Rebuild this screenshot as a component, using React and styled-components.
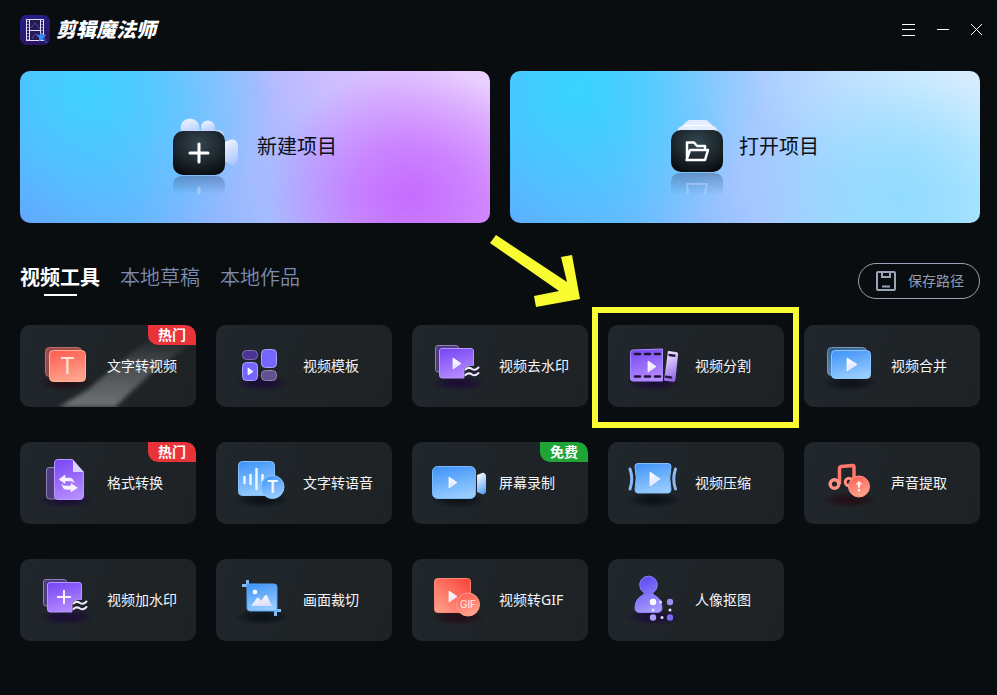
import React, { useState } from 'react'
import styled, { createGlobalStyle, css } from 'styled-components'

const GlobalStyle = createGlobalStyle`
  * {
    box-sizing: border-box;
  }

  body {
    margin: 0;
    background: #090d10;
    color: #fff;
    font-family: 'Noto Sans', 'Noto Sans CJK SC', sans-serif;
  }

  button {
    margin: 0;
    padding: 0;
    border: 0;
    background: none;
    color: inherit;
    font: inherit;
    cursor: pointer;
  }
`

const Page = styled.div`
  min-height: 100vh;
  padding-bottom: 54px;
  overflow: hidden;
`

const Header = styled.header`
  display: flex;
  align-items: center;
  justify-content: space-between;
  height: 59px;
  padding: 0 3px 0 20px;
`

const Brand = styled.div`
  display: flex;
  align-items: center;
  gap: 6px;
`

const BrandName = styled.h1`
  margin: 0;
  font-size: 20px;
  line-height: 28px;
  font-weight: 900;
  font-style: italic;
`

const WindowControls = styled.div`
  display: flex;
`

const ControlButton = styled.button`
  display: flex;
  align-items: center;
  justify-content: center;
  width: 34px;
  height: 34px;
`

const Main = styled.main`
  padding: 12px 17px 0 20px;
`

const Banners = styled.div`
  display: grid;
  grid-template-columns: 1fr 1fr;
  gap: 20px;
`

const newProject = css`
  background: radial-gradient(ellipse 30% 85% at 83% 82%, #c76cff 0%, #c76cffb0 40%, #c76cff00 100%),
    radial-gradient(ellipse 50% 90% at 100% 0%, #e8d4ff 0%, #e8d4ff00 100%),
    radial-gradient(ellipse 40% 110% at 14% 14%, #40d2ff 0%, #40d2ffa0 40%, #40d2ff00 100%),
    linear-gradient(75deg, #68a0ff 0%, #6cb0ff 22%, #a4bcff 48%, #c0b4ff 68%, #e09cff 100%);
`

const openProject = css`
  background: radial-gradient(ellipse 30% 85% at 83% 82%, #92dcff 0%, #92dcffb0 40%, #92dcff00 100%),
    radial-gradient(ellipse 50% 90% at 100% 0%, #d8ecff 0%, #d8ecff00 100%),
    radial-gradient(ellipse 40% 110% at 14% 14%, #38d4ff 0%, #38d4ffa0 40%, #38d4ff00 100%),
    linear-gradient(75deg, #62a8ff 0%, #6cb6ff 22%, #a6c6ff 48%, #a9d2ff 68%, #bcf0ff 100%);
`

const Banner = styled.button`
  display: flex;
  align-items: center;
  justify-content: center;
  gap: ${({ $open }) => ($open ? 16 : 18)}px;
  height: 152px;
  border-radius: 10px;
  color: #0a0f16;
  font-size: 20px;
  line-height: 28px;
  ${({ $open }) => ($open ? openProject : newProject)}
`

const Toolbar = styled.div`
  display: flex;
  align-items: flex-start;
  justify-content: space-between;
  margin: 40px 0 26px;
`

const Tabs = styled.div`
  display: flex;
  gap: 20px;
`

const Tab = styled.button`
  color: ${({ $active }) => ($active ? '#fff' : '#7c8cae')};
  font-size: 20px;
  line-height: 30px;
  font-weight: ${({ $active }) => ($active ? 700 : 350)};

  &::after {
    content: '';
    display: block;
    width: 33px;
    height: 2px;
    margin: 1px auto 0;
    background: ${({ $active }) => ($active ? '#fff' : 'transparent')};
  }
`

const SaveButton = styled.button`
  display: flex;
  align-items: center;
  gap: 12px;
  height: 36px;
  padding: 0 15px 0 17px;
  border: 1px solid #9aa3b5;
  border-radius: 18px;
  color: #909db3;
  font-size: 14px;
  line-height: 20px;
`

const ToolGrid = styled.ul`
  display: grid;
  grid-template-columns: repeat(5, 1fr);
  gap: 35px 20px;
  margin: 0;
  padding: 0;
  list-style: none;
`

const ToolItem = styled.li`
  position: relative;
`

const ToolCard = styled.button`
  display: flex;
  align-items: center;
  position: relative;
  width: 100%;
  height: 82px;
  overflow: hidden;
  border-radius: 10px;
  background: linear-gradient(110deg, #20272d 0%, #1f2428 45%, #1e2225 100%);
  font-size: 14px;
  line-height: 20px;
  white-space: nowrap;
`

const ToolName = styled.span`
  position: relative;
  color: #f4f6f8;
`

const Beam = styled.span`
  position: absolute;
  inset: 0;
  filter: blur(2px);

  &::before {
    content: '';
    position: absolute;
    inset: 0;
    background: linear-gradient(to top, #ffffff5c, #ffffff30 50%, #ffffff08 80%);
    clip-path: polygon(22% 100%, 38% 80%, 56% 47%, 73% 18%, 100% 18%, 78% 52%, 64% 80%, 54% 100%);
  }
`

const Badge = styled.span`
  position: absolute;
  top: 0;
  right: 0;
  width: 48px;
  height: 20px;
  border-radius: 0 10px 0 10px;
  background: ${({ $free }) => ($free ? '#1fa436' : '#e83338')};
  color: #fff;
  font-size: 14px;
  line-height: 20px;
  font-weight: 700;
  text-align: center;
`

const Highlight = styled.span`
  position: absolute;
  inset: -18px -15px -21px -16px;
  border: 6px solid #f8fc30;
  pointer-events: none;
`

const PointerArrow = styled.svg`
  position: absolute;
  top: -91px;
  left: -118px;
  pointer-events: none;
`

const gradients = [
  ['violet', '#7a4af4', '#b68cff'],
  ['violetDim', '#513a86', '#4a3d70'],
  ['indigo', '#5c48f4', '#a79cff'],
  ['blue', '#4496f8', '#9bceff'],
  ['blueDim', '#35658f', '#5d8fc0'],
  ['red', '#ff6054', '#ffa68e'],
  ['redDim', '#a04b4c', '#8b4745'],
  ['white', '#ffffff', '#d9dcff'],
  ['strip', '#f4eeff', '#8f62e8'],
  ['lens', '#f6fbff', '#5ba4f8'],
  ['lamp', '#eef4ff', '#a9c4ff'],
  ['logo', '#25208c', '#2b1460'],
]

function GradientDefs() {
  return (
    <svg width='0' height='0' style={{ position: 'absolute' }} aria-hidden='true'>
      <defs>
        {gradients.map(([id, from, to]) => (
          <linearGradient key={id} id={id} x1='0.3' y1='0' x2='0.6' y2='1'>
            <stop offset='0' stopColor={from} />
            <stop offset='1' stopColor={to} />
          </linearGradient>
        ))}
        <linearGradient id='redCorner' x1='1' y1='0' x2='0' y2='1'>
          <stop offset='0' stopColor='#fb4038' />
          <stop offset='1' stopColor='#ffa68e' />
        </linearGradient>
        <radialGradient id='box' cx='0.5' cy='0.3' r='0.75'>
          <stop offset='0' stopColor='#33454f' />
          <stop offset='0.5' stopColor='#202b32' />
          <stop offset='1' stopColor='#080c10' />
        </radialGradient>
        <linearGradient id='reflection' x1='0' y1='0' x2='0' y2='1'>
          <stop offset='0' stopColor='#44608f' stopOpacity='0.5' />
          <stop offset='1' stopColor='#44608f' stopOpacity='0' />
        </linearGradient>
        {[
          ['shadeViolet', '#1c0c36'],
          ['shadeBlue', '#0c1218'],
          ['shadeRed', '#220e15'],
        ].map(([id, color]) => (
          <radialGradient key={id} id={id}>
            <stop offset='0' stopColor={color} />
            <stop offset='0.5' stopColor={color} stopOpacity='0.7' />
            <stop offset='1' stopColor={color} stopOpacity='0' />
          </radialGradient>
        ))}
      </defs>
    </svg>
  )
}

function ToolIcon({ shade, children }) {
  return (
    <svg width='87' height='82' viewBox='0 0 87 82' fill='none' aria-hidden='true'>
      <ellipse cx='46' cy='58' rx='28' ry='8' fill={`url(#${shade})`} />
      {children}
    </svg>
  )
}

function Play({ x, y, w, h }) {
  return (
    <path
      d={`M${x} ${y}l${w} ${h / 2}l${-w} ${h / 2}z`}
      fill='url(#white)'
      stroke='#fff'
      strokeOpacity='0.7'
      strokeWidth='1'
      strokeLinejoin='round'
    />
  )
}

function WatermarkBase({ children }) {
  return (
    <ToolIcon shade='shadeViolet'>
      <path
        d='M27.500 47H26a2.500 2.500 0 0 1-2.500-2.500V23a2.500 2.500 0 0 1 2.500-2.500h18q2 0 3 2.500'
        fill='url(#violetDim)'
        stroke='#8f80b5'
      />
      <path
        d='M30 23.500h29a2.500 2.500 0 0 1 2.500 2.500v14.500c-3-1-7 1-9.500 2.500v10H30a2.500 2.500 0 0 1-2.500-2.500V26a2.500 2.500 0 0 1 2.500-2.500z'
        fill='url(#violet)'
        stroke='#b794ff'
      />
      <path
        d='M53.500 44.500c3-3 5-1.500 6.500-.5s3.500 1.500 6.500-1.500M53.500 50c3-3 5-1.500 6.500-.5s3.500 1.500 6.500-1.500'
        stroke='#eee7ff'
        strokeWidth='2'
        strokeLinecap='round'
      />
      {children}
    </ToolIcon>
  )
}

const icons = {
  textToVideo: (
    <ToolIcon shade='shadeRed'>
      <rect x='25.500' y='22.500' width='36' height='29' rx='4' fill='url(#redDim)' stroke='#c06c67' />
      <rect x='29.500' y='25.500' width='36' height='31' rx='4' fill='url(#red)' stroke='#ffb19b' />
      <text x='47.500' y='49' fill='#ffe2d6' fontSize='23' textAnchor='middle' fontFamily='Inter, sans-serif'>
        T
      </text>
    </ToolIcon>
  ),
  template: (
    <ToolIcon shade='shadeViolet'>
      <rect x='26.500' y='25.500' width='15' height='9' rx='4' fill='#4c3494' stroke='#7c6cae' />
      <rect x='45.500' y='24.500' width='15' height='18' rx='4' fill='#7566ff' stroke='#a99fff' />
      <rect x='26.500' y='37.500' width='15' height='18' rx='4' fill='#7566ff' stroke='#a99fff' />
      <rect x='45.500' y='45.500' width='15' height='10' rx='4' fill='#62518f' stroke='#9085ad' />
      <Play x={32} y={43} w={5} h={7} />
    </ToolIcon>
  ),
  removeWatermark: (
    <WatermarkBase>
      <Play x={41} y={33} w={8} h={11} />
    </WatermarkBase>
  ),
  split: (
    <ToolIcon shade='shadeViolet'>
      <path d='M25 25l29.500-1v32H25a2.500 2.500 0 0 1-2.500-2.500v-26A2.500 2.500 0 0 1 25 25z' fill='url(#violet)' stroke='#a58cff' />
      <path
        d='M27 29h5m5 0h5m5 0h5m-25 22.500h5m5 0h5m5 0h5'
        stroke='#201338'
        strokeWidth='2.500'
        strokeLinecap='round'
      />
      <Play x={40} y={36} w={8} h={11} />
      <path d='M60 26l8 1a2.500 2.500 0 0 1 2 3l-2.500 24.500a2.500 2.500 0 0 1-3 2.200L56 55.500z' fill='url(#strip)' />
      <path d='M61.500 30l5 .7M58 51.800l5 .7' stroke='#2b194a' strokeWidth='2.500' strokeLinecap='round' />
    </ToolIcon>
  ),
  merge: (
    <ToolIcon shade='shadeBlue'>
      <rect x='23.500' y='22.500' width='39' height='28' rx='4' fill='url(#blueDim)' stroke='#7299bd' />
      <rect x='27.500' y='25.500' width='39' height='28' rx='4' fill='url(#blue)' stroke='#8dc6ff' />
      <Play x={43} y={33} w={10} h={13} />
    </ToolIcon>
  ),
  convert: (
    <ToolIcon shade='shadeViolet'>
      <path d='M35 25.500h-6a2.500 2.500 0 0 0-2.500 2.500v26a3 3 0 0 0 3 3H37' fill='url(#violetDim)' stroke='#8f80b5' />
      <path
        d='M38 17.500h14.500L63.500 30v24a3.500 3.500 0 0 1-3.500 3.500H38a3.500 3.500 0 0 1-3.500-3.500V21a3.500 3.500 0 0 1 3.500-3.500z'
        fill='url(#violet)'
        stroke='#bb98ff'
      />
      <path d='M53 18l10.500 12H53z' fill='#dcd0ff' />
      <path
        d='M45 33l-6 4.500 6 4V39h5.500q3 0 3.500 2-.5-5-5-5H45zM51 41.500V44h-5q-3.500 0-4-2 .5 5.500 5 5.500h4V50l6.500-4.200z'
        fill='#f6f0ff'
        stroke='#f6f0ff'
        strokeWidth='0.500'
      />
    </ToolIcon>
  ),
  speech: (
    <ToolIcon shade='shadeBlue'>
      <rect x='22.500' y='19.500' width='36' height='34' rx='4' fill='url(#blue)' stroke='#86c0fb' />
      <path d='M28.500 35v6M34.500 33v9M40.500 27v20M46.500 33v6' stroke='#eaf6ff' strokeWidth='2.500' strokeLinecap='round' />
      <circle cx='56.500' cy='45' r='11.500' fill='url(#blue)' stroke='#8cc5fb' />
      <text x='56.500' y='51' fill='#effaff' fontSize='17' fontWeight='600' textAnchor='middle' fontFamily='Inter, sans-serif'>
        T
      </text>
    </ToolIcon>
  ),
  record: (
    <ToolIcon shade='shadeBlue'>
      <rect x='20.500' y='24.500' width='43' height='32' rx='5' fill='url(#blue)' stroke='#74baff' />
      <path d='M65 33l5-2a3 3 0 0 1 4 3v15a3 3 0 0 1-4 3l-5-2z' fill='url(#lens)' />
      <Play x={37} y={35} w={8} h={11} />
    </ToolIcon>
  ),
  compress: (
    <ToolIcon shade='shadeBlue'>
      <path
        d='M30 21.500h30q3 0 3 3-2.500 11.500 0 23 0 3.500-3 3.500H30q-3 0-3-3.500 2.500-11.500 0-23 0-3 3-3z'
        fill='url(#blue)'
        stroke='#82bfff'
      />
      <path d='M22 27q3.500 10 0 20M67.500 27q-3.500 10 0 20' stroke='#8bbaf3' strokeWidth='3' strokeLinecap='round' />
      <Play x={42} y={30} w={10} h={14} />
    </ToolIcon>
  ),
  extractAudio: (
    <ToolIcon shade='shadeRed'>
      <path d='M35.500 42V26.500q0-1.500 2-2l11-1q1.500 0 1.500 1.500v14' stroke='#ff776d' strokeWidth='3.500' />
      <circle cx='30.500' cy='42' r='4.300' stroke='#ff9183' strokeWidth='3.500' />
      <circle cx='45' cy='40' r='3.800' stroke='#ff9183' strokeWidth='3' />
      <circle cx='55' cy='44.500' r='10.500' fill='url(#red)' stroke='#ff9888' />
      <path d='M55 39l-3.500 3.500H54v3h2v-3h2.500zM54 47h2v2.500h-2z' fill='#fff2e9' />
    </ToolIcon>
  ),
  addWatermark: (
    <WatermarkBase>
      <path d='M44 31v14M37 38h14' stroke='#f7f0ff' strokeWidth='2' />
    </WatermarkBase>
  ),
  crop: (
    <ToolIcon shade='shadeBlue'>
      <path d='M26 26.500h5M31.500 21v6M60 51.500h5M59.500 51v6' stroke='#82baf2' strokeWidth='3' />
      <path d='M31 25h27a3 3 0 0 1 3 3v24H34a3 3 0 0 1-3-3z' fill='url(#blue)' stroke='#55a4f5' />
      <circle cx='39' cy='33' r='2.300' fill='#fff' />
      <path d='M35 47l6-8q1-1 2 0l2 3 4-5.500q1-1 2 0L56 47z' fill='url(#white)' />
    </ToolIcon>
  ),
  gif: (
    <ToolIcon shade='shadeRed'>
      <rect x='22.500' y='19.500' width='36' height='34' rx='3' fill='url(#redCorner)' stroke='#ff8677' />
      <Play x={37} y={32} w={8} h={11} />
      <circle cx='56' cy='45.500' r='11.500' fill='url(#red)' stroke='#ff9d8c' />
      <text x='56' y='49' fill='#fff0ea' fontSize='10' textAnchor='middle' fontFamily='Inter, sans-serif'>
        GIF
      </text>
    </ToolIcon>
  ),
  cutout: (
    <ToolIcon shade='shadeViolet'>
      <path
        d='M36 33.500a8.800 8.800 0 1 1 9 0q-1 1.500 1 2.500 8 3.500 8 13 0 4.500-5 4.500H32q-5 0-5-4.500 0-9.500 8-13 2-1 1-2.500z'
        fill='url(#indigo)'
        stroke='#8c80ff'
      />
      <circle cx='45' cy='43' r='3.200' fill='#fff' />
      <circle cx='62' cy='43' r='3.200' fill='#9f8cf4' />
      <circle cx='45' cy='58.500' r='3.200' fill='#ab9ef6' />
      <circle cx='62' cy='58.500' r='3.200' fill='#7a68f0' />
      <path d='M52.500 43h0M45 51h0M62 51h0M54 58.500h0' stroke='#e4ddff' strokeWidth='3' strokeLinecap='round' />
    </ToolIcon>
  ),
}

const tools = [
  { name: '文字转视频', icon: 'textToVideo', badge: '热门', beam: true },
  { name: '视频模板', icon: 'template' },
  { name: '视频去水印', icon: 'removeWatermark' },
  { name: '视频分割', icon: 'split', highlighted: true },
  { name: '视频合并', icon: 'merge' },
  { name: '格式转换', icon: 'convert', badge: '热门' },
  { name: '文字转语音', icon: 'speech' },
  { name: '屏幕录制', icon: 'record', badge: '免费' },
  { name: '视频压缩', icon: 'compress' },
  { name: '声音提取', icon: 'extractAudio' },
  { name: '视频加水印', icon: 'addWatermark' },
  { name: '画面裁切', icon: 'crop' },
  { name: '视频转GIF', icon: 'gif' },
  { name: '人像抠图', icon: 'cutout' },
]

const tabs = ['视频工具', '本地草稿', '本地作品']

function Logo() {
  return (
    <svg width='30' height='30' viewBox='0 0 30 30' fill='none' aria-hidden='true'>
      <rect width='30' height='30' rx='7' fill='url(#logo)' />
      <rect x='6.500' y='4.500' width='17' height='21' fill='#251b55' stroke='#e5dcff' />
      <path d='M9.500 5v20M20.500 5v20M10 15.500h11' stroke='#e5dcff' />
      <path d='M8 6v19M22 6v19' stroke='#e5dcff' strokeDasharray='1 2' />
      <path d='M11 13l4-5 5 6M12 24l3-5 4 1' stroke='#56499a' />
      <path d='M21 17l1.500 3 4-.5-2.500 3 2 3-4-1-3 2v-4l-3-2 4-.5z' fill='#3b8df2' />
      <path d='M23 23l4 5' stroke='#304a9c' strokeWidth='1.500' />
    </svg>
  )
}

function CameraIcon() {
  return (
    <svg width='66' height='96' viewBox='0 0 66 96' fill='none' aria-hidden='true'>
      <circle cx='17' cy='29' r='9.500' fill='url(#lamp)' />
      <circle cx='35' cy='28.500' r='7' fill='url(#lamp)' />
      <path d='M8 36v-5h36q6 0 7 5z' fill='#c6d7ff' />
      <path d='M52 43l6-2.500q6-1 7 6v13q-1 7-7 6.500l-6-4z' fill='url(#lamp)' />
      <rect y='32' width='52' height='44' rx='10' fill='url(#box)' />
      <path d='M26 45v18M17 54h18' stroke='#fff' strokeWidth='3' strokeLinecap='round' />
      <path d='M0 95V86q0-9 10-9h32q10 0 10 9v9z' fill='url(#reflection)' />
      <path d='M26 89v5' stroke='#cfe2ff' strokeOpacity='0.5' strokeWidth='3' strokeLinecap='round' />
    </svg>
  )
}

function FolderIcon() {
  return (
    <svg width='52' height='96' viewBox='0 0 52 96' fill='none' aria-hidden='true'>
      <path d='M6 33q1-5 5-6l4-4q2-2 4-2h15q2 0 4 2l4 4q4 1 5 6z' fill='#e4edff' />
      <path d='M12 26.500h28' stroke='#fff' />
      <rect y='31' width='52' height='42' rx='10' fill='url(#box)' />
      <path
        d='M16 61V43.500h7l3 3.500h8v4M15.500 61L19 51h18l-3 10z'
        stroke='#fff'
        strokeWidth='2.500'
        strokeLinejoin='round'
      />
      <path d='M0 96V83q0-9 10-9h32q10 0 10 9v13z' fill='url(#reflection)' />
      <path d='M17 95l-1-10h20l-2 10' stroke='#cfe2ff' strokeOpacity='0.4' strokeWidth='2' />
    </svg>
  )
}

function App() {
  const [activeTab, setActiveTab] = useState(tabs[0])

  return (
    <Page>
      <GlobalStyle />
      <GradientDefs />
      <Header>
        <Brand>
          <Logo />
          <BrandName>剪辑魔法师</BrandName>
        </Brand>
        <WindowControls>
          <ControlButton aria-label='菜单'>
            <svg width='14' height='12' viewBox='0 0 14 12' stroke='#fff'>
              <path d='M0 .5h13M0 5.500h13M0 11.500h13' />
            </svg>
          </ControlButton>
          <ControlButton aria-label='最小化'>
            <svg width='12' height='12' viewBox='0 0 12 12' stroke='#fff'>
              <path d='M0 5.500h12' />
            </svg>
          </ControlButton>
          <ControlButton aria-label='关闭'>
            <svg width='12' height='12' viewBox='0 0 12 12' stroke='#fff'>
              <path d='M0 0l11 11M11 0l-11 11' />
            </svg>
          </ControlButton>
        </WindowControls>
      </Header>
      <Main>
        <Banners>
          <Banner>
            <CameraIcon />
            新建项目
          </Banner>
          <Banner $open>
            <FolderIcon />
            打开项目
          </Banner>
        </Banners>
        <Toolbar>
          <Tabs role='tablist'>
            {tabs.map((tab) => (
              <Tab
                key={tab}
                role='tab'
                aria-selected={tab === activeTab}
                $active={tab === activeTab}
                onClick={() => setActiveTab(tab)}
              >
                {tab}
              </Tab>
            ))}
          </Tabs>
          <SaveButton>
            <svg width='20' height='20' viewBox='0 0 20 20' fill='none' stroke='#9aa5b8' strokeWidth='2' aria-hidden='true'>
              <rect x='1' y='1' width='18' height='18' rx='1' />
              <path d='M6 1v5h8V1M6 15.500h8' />
            </svg>
            保存路径
          </SaveButton>
        </Toolbar>
        <ToolGrid>
          {tools.map(({ name, icon, badge, beam, highlighted }) => (
            <ToolItem key={name}>
              <ToolCard>
                {beam && <Beam />}
                {icons[icon]}
                <ToolName>{name}</ToolName>
                {badge && <Badge $free={badge === '免费'}>{badge}</Badge>}
              </ToolCard>
              {highlighted && (
                <>
                  <Highlight />
                  <PointerArrow width='90' height='74' viewBox='0 0 90 74' aria-hidden='true'>
                    <path d='M6 1l71 47-6-25 11-2 8 44-44 8-2-11 25-5L0 9z' fill='#f8fc30' />
                  </PointerArrow>
                </>
              )}
            </ToolItem>
          ))}
        </ToolGrid>
      </Main>
    </Page>
  )
}

export default App
